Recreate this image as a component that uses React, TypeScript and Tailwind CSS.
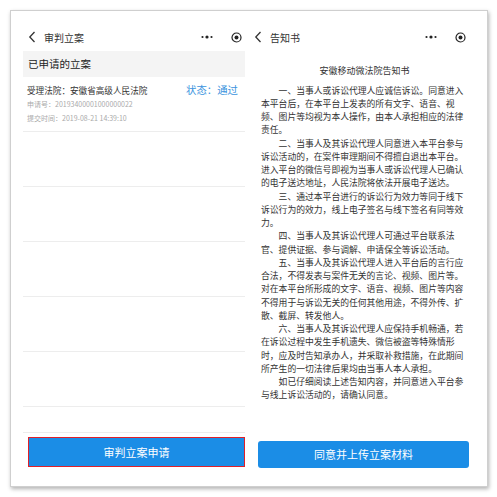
import React from 'react';

const noticeLines: { text: string; indent?: boolean }[] = [
  { text: '一、当事人或诉讼代理人应诚信诉讼。同意进入', indent: true },
  { text: '本平台后，在本平台上发表的所有文字、语音、视' },
  { text: '频、图片等均视为本人操作，由本人承担相应的法律' },
  { text: '责任。' },
  { text: '二、当事人及其诉讼代理人同意进入本平台参与', indent: true },
  { text: '诉讼活动的，在案件审理期间不得擅自退出本平台。' },
  { text: '进入平台的微信号即视为当事人或诉讼代理人已确认' },
  { text: '的电子送达地址，人民法院将依法开展电子送达。' },
  { text: '三、通过本平台进行的诉讼行为效力等同于线下', indent: true },
  { text: '诉讼行为的效力，线上电子签名与线下签名有同等效' },
  { text: '力。' },
  { text: '四、当事人及其诉讼代理人可通过平台联系法', indent: true },
  { text: '官、提供证据、参与调解、申请保全等诉讼活动。' },
  { text: '五、当事人及其诉讼代理人进入平台后的言行应', indent: true },
  { text: '合法，不得发表与案件无关的言论、视频、图片等。' },
  { text: '对在本平台所形成的文字、语音、视频、图片等内容' },
  { text: '不得用于与诉讼无关的任何其他用途，不得外传、扩' },
  { text: '散、截屏、转发他人。' },
  { text: '六、当事人及其诉讼代理人应保持手机畅通，若', indent: true },
  { text: '在诉讼过程中发生手机遗失、微信被盗等特殊情形' },
  { text: '时，应及时告知承办人，并采取补救措施，在此期间' },
  { text: '所产生的一切法律后果均由当事人本人承担。' },
  { text: '如已仔细阅读上述告知内容，并同意进入平台参', indent: true },
  { text: '与线上诉讼活动的，请确认同意。' },
];

function BackIcon() {
  return (
    <svg width="8" height="12" viewBox="0 0 8 12" className="shrink-0">
      <path d="M6.5 1 L1.8 6 L6.5 11" fill="none" stroke="#333" strokeWidth="1.3" />
    </svg>
  );
}

function Capsule() {
  return (
    <div className="flex items-center">
      <svg width="12" height="4" viewBox="0 0 12 4">
        <circle cx="1.5" cy="2" r="1.1" fill="#222" />
        <circle cx="6" cy="2" r="1.6" fill="#222" />
        <circle cx="10.5" cy="2" r="1.1" fill="#222" />
      </svg>
      <div className="w-[18px]" />
      <svg width="11" height="11" viewBox="0 0 11 11">
        <circle cx="5.5" cy="5.5" r="4.5" fill="none" stroke="#222" strokeWidth="1.2" />
        <circle cx="5.5" cy="5.5" r="2" fill="#222" />
      </svg>
    </div>
  );
}

function Header({ title }: { title: string }) {
  return (
    <div className="flex items-center h-[40px] pt-[12px]">
      <BackIcon />
      <span className="ml-[8px] text-[10px] text-[#333]">{title}</span>
      <div className="flex-1" />
      <Capsule />
    </div>
  );
}

export default function App() {
  const emptyRows = [1, 2, 3, 4, 5];

  return (
    <div
      className="w-[497px] h-[497px] bg-white p-[10px]"
      style={{ fontFamily: '"Noto Sans CJK SC", "Noto Sans", sans-serif' }}
    >
      <div className="w-[478px] h-[477px] bg-white border border-[#cfcfcf] shadow-[1px_2px_4px_rgba(0,0,0,0.3)] flex">
        {/* left screen */}
        <div className="w-[222px] ml-[12px] flex flex-col">
          <div className="pl-[5px] pr-[3px]">
            <Header title="审判立案" />
          </div>
          <div className="h-[26px] bg-[#f4f4f4] flex items-center pl-[5px] text-[10.5px] text-[#222]">
            已申请的立案
          </div>
          <div className="h-[55px] border-b border-[#ededed] pl-[4px] pr-[7px] pt-[6px] flex flex-col">
            <div className="flex items-center justify-between h-[14px]">
              <span className="text-[8.6px] text-[#333]">受理法院：安徽省高级人民法院</span>
              <span className="text-[10.4px] text-[#3b94de]">状态：通过</span>
            </div>
            <div className="text-[7px] text-[#aaa] leading-[14px]">申请号：20193400001000000022</div>
            <div className="text-[7px] text-[#aaa] leading-[14px]">提交时间：2019-08-21 14:39:10</div>
          </div>
          {emptyRows.map((r) => (
            <div key={r} className="h-[55px] border-b border-[#ededed]" />
          ))}
          <div className="mt-[25px] border-t border-[#ececec] pt-[4px] pl-[5px]">
            <div className="h-[30px] border-[1.5px] border-[#e0202a] flex items-center justify-center bg-[#1b8de6]">
              <span className="text-[11px] text-white">审判立案申请</span>
            </div>
          </div>
        </div>

        {/* right screen */}
        <div className="w-[222px] ml-[9px] flex flex-col">
          <div className="pr-[10px]">
            <Header title="告知书" />
          </div>
          <div className="pl-[7px] flex flex-col text-[#333]">
            <div className="pt-[12.5px] h-[25.5px] leading-[13px] text-[9px] text-center w-[207px]">
              安徽移动微法院告知书
            </div>
            <div className="mt-[7px] text-[8.8px] leading-[13.25px]">
              {noticeLines.map((l, i) => (
                <div key={i} className={`whitespace-nowrap ${l.indent ? 'pl-[17.6px]' : ''}`}>
                  {l.text}
                </div>
              ))}
            </div>
          </div>
          <div className="mt-auto mb-[18px] pl-[4px] pr-[7px]">
            <div className="h-[27px] rounded-[3px] bg-[#1b8de6] flex items-center justify-center">
              <span className="text-[11px] text-white">同意并上传立案材料</span>
            </div>
          </div>
        </div>
      </div>
    </div>
  );
}
